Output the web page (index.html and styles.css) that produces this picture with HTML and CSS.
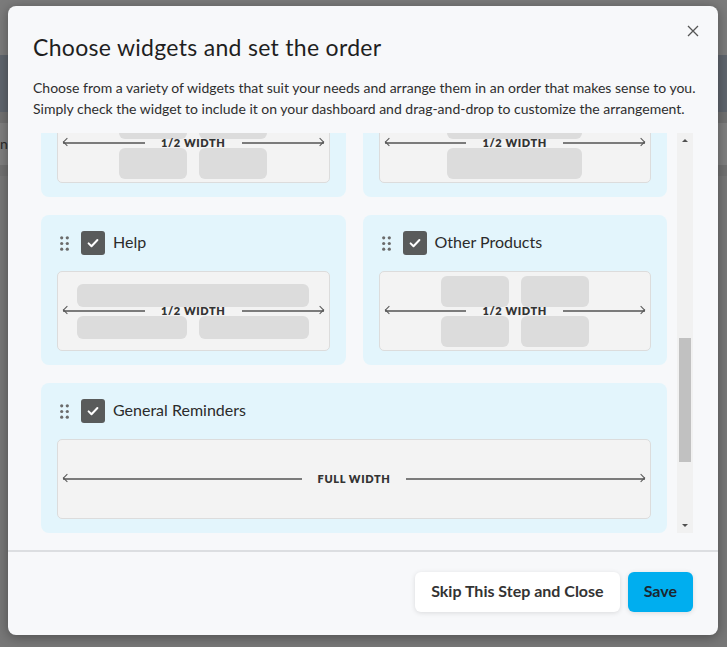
FILE: index.html
```html
<!DOCTYPE html>
<html lang="en">
<head>
    <meta charset="UTF-8">
    <meta name="viewport" content="width=device-width, initial-scale=1.0">
    <title>Dashboard - Choose widgets</title>
    <link rel="stylesheet" href="styles.css">
</head>
<body>
    <div class="page">
        <div class="page-top"></div>
        <div class="page-nav"></div>
        <div class="page-gap"></div>
        <div class="page-row"><span>Finance</span></div>
        <div class="page-gap"></div>
    </div>

    <div class="modal">
        <button class="modal-close" aria-label="Close">
            <svg width="12" height="12" viewBox="0 0 12 12"><path d="M1 1L11 11M11 1L1 11" stroke="#555" stroke-width="1.3" fill="none"/></svg>
        </button>

        <div class="modal-header">
            <h2>Choose widgets and set the order</h2>
            <p>Choose from a variety of widgets that suit your needs and arrange them in an order that makes sense to you. Simply check the widget to include it on your dashboard and drag-and-drop to customize the arrangement.</p>
        </div>

        <div class="list-wrap">
            <div class="widget-list" id="widget-list">
                <div class="widget full">
                    <div class="widget-head">
                        <span class="drag-handle"><svg width="9" height="15" viewBox="0 0 9 15"><circle cx="1.7" cy="1.8" r="1.6"/><circle cx="7.3" cy="1.8" r="1.6"/><circle cx="1.7" cy="7.5" r="1.6"/><circle cx="7.3" cy="7.5" r="1.6"/><circle cx="1.7" cy="13.2" r="1.6"/><circle cx="7.3" cy="13.2" r="1.6"/></svg></span>
                        <span class="check"><svg width="24" height="24" viewBox="0 0 24 24"><path d="M7.6 12.4l2.9 2.8 5.9-6.2" stroke="#fff" stroke-width="2" fill="none" stroke-linecap="round" stroke-linejoin="round"/></svg></span>
                        <span class="widget-name">Announcements</span>
                    </div>
                    <div class="preview">
                        <div class="width-label"><span class="line left"></span><b>Full Width</b><span class="line right"></span></div>
                    </div>
                </div>

                <div class="widget">
                    <div class="widget-head">
                        <span class="drag-handle"><svg width="9" height="15" viewBox="0 0 9 15"><circle cx="1.7" cy="1.8" r="1.6"/><circle cx="7.3" cy="1.8" r="1.6"/><circle cx="1.7" cy="7.5" r="1.6"/><circle cx="7.3" cy="7.5" r="1.6"/><circle cx="1.7" cy="13.2" r="1.6"/><circle cx="7.3" cy="13.2" r="1.6"/></svg></span>
                        <span class="check"><svg width="24" height="24" viewBox="0 0 24 24"><path d="M7.6 12.4l2.9 2.8 5.9-6.2" stroke="#fff" stroke-width="2" fill="none" stroke-linecap="round" stroke-linejoin="round"/></svg></span>
                        <span class="widget-name">My Tasks</span>
                    </div>
                    <div class="preview">
                        <div class="blocks quad"><span class="block"></span><span class="block"></span><span class="block"></span><span class="block"></span></div>
                        <div class="width-label"><span class="line left"></span><b>1/2 Width</b><span class="line right"></span></div>
                    </div>
                </div>
                <div class="widget">
                    <div class="widget-head">
                        <span class="drag-handle"><svg width="9" height="15" viewBox="0 0 9 15"><circle cx="1.7" cy="1.8" r="1.6"/><circle cx="7.3" cy="1.8" r="1.6"/><circle cx="1.7" cy="7.5" r="1.6"/><circle cx="7.3" cy="7.5" r="1.6"/><circle cx="1.7" cy="13.2" r="1.6"/><circle cx="7.3" cy="13.2" r="1.6"/></svg></span>
                        <span class="check"><svg width="24" height="24" viewBox="0 0 24 24"><path d="M7.6 12.4l2.9 2.8 5.9-6.2" stroke="#fff" stroke-width="2" fill="none" stroke-linecap="round" stroke-linejoin="round"/></svg></span>
                        <span class="widget-name">Calendar</span>
                    </div>
                    <div class="preview">
                        <div class="blocks stack"><span class="block"></span><span class="block"></span></div>
                        <div class="width-label"><span class="line left"></span><b>1/2 Width</b><span class="line right"></span></div>
                    </div>
                </div>

                <div class="widget full">
                    <div class="widget-head">
                        <span class="drag-handle"><svg width="9" height="15" viewBox="0 0 9 15"><circle cx="1.7" cy="1.8" r="1.6"/><circle cx="7.3" cy="1.8" r="1.6"/><circle cx="1.7" cy="7.5" r="1.6"/><circle cx="7.3" cy="7.5" r="1.6"/><circle cx="1.7" cy="13.2" r="1.6"/><circle cx="7.3" cy="13.2" r="1.6"/></svg></span>
                        <span class="check"><svg width="24" height="24" viewBox="0 0 24 24"><path d="M7.6 12.4l2.9 2.8 5.9-6.2" stroke="#fff" stroke-width="2" fill="none" stroke-linecap="round" stroke-linejoin="round"/></svg></span>
                        <span class="widget-name">Quick Links</span>
                    </div>
                    <div class="preview">
                        <div class="width-label"><span class="line left"></span><b>Full Width</b><span class="line right"></span></div>
                    </div>
                </div>

                <div class="widget">
                    <div class="widget-head">
                        <span class="drag-handle"><svg width="9" height="15" viewBox="0 0 9 15"><circle cx="1.7" cy="1.8" r="1.6"/><circle cx="7.3" cy="1.8" r="1.6"/><circle cx="1.7" cy="7.5" r="1.6"/><circle cx="7.3" cy="7.5" r="1.6"/><circle cx="1.7" cy="13.2" r="1.6"/><circle cx="7.3" cy="13.2" r="1.6"/></svg></span>
                        <span class="check"><svg width="24" height="24" viewBox="0 0 24 24"><path d="M7.6 12.4l2.9 2.8 5.9-6.2" stroke="#fff" stroke-width="2" fill="none" stroke-linecap="round" stroke-linejoin="round"/></svg></span>
                        <span class="widget-name">Documents</span>
                    </div>
                    <div class="preview">
                        <div class="blocks quad"><span class="block"></span><span class="block"></span><span class="block"></span><span class="block"></span></div>
                        <div class="width-label"><span class="line left"></span><b>1/2 Width</b><span class="line right"></span></div>
                    </div>
                </div>
                <div class="widget">
                    <div class="widget-head">
                        <span class="drag-handle"><svg width="9" height="15" viewBox="0 0 9 15"><circle cx="1.7" cy="1.8" r="1.6"/><circle cx="7.3" cy="1.8" r="1.6"/><circle cx="1.7" cy="7.5" r="1.6"/><circle cx="7.3" cy="7.5" r="1.6"/><circle cx="1.7" cy="13.2" r="1.6"/><circle cx="7.3" cy="13.2" r="1.6"/></svg></span>
                        <span class="check"><svg width="24" height="24" viewBox="0 0 24 24"><path d="M7.6 12.4l2.9 2.8 5.9-6.2" stroke="#fff" stroke-width="2" fill="none" stroke-linecap="round" stroke-linejoin="round"/></svg></span>
                        <span class="widget-name">Messages</span>
                    </div>
                    <div class="preview">
                        <div class="blocks stack"><span class="block"></span><span class="block"></span></div>
                        <div class="width-label"><span class="line left"></span><b>1/2 Width</b><span class="line right"></span></div>
                    </div>
                </div>

                <div class="widget">
                    <div class="widget-head">
                        <span class="drag-handle"><svg width="9" height="15" viewBox="0 0 9 15"><circle cx="1.7" cy="1.8" r="1.6"/><circle cx="7.3" cy="1.8" r="1.6"/><circle cx="1.7" cy="7.5" r="1.6"/><circle cx="7.3" cy="7.5" r="1.6"/><circle cx="1.7" cy="13.2" r="1.6"/><circle cx="7.3" cy="13.2" r="1.6"/></svg></span>
                        <span class="check"><svg width="24" height="24" viewBox="0 0 24 24"><path d="M7.6 12.4l2.9 2.8 5.9-6.2" stroke="#fff" stroke-width="2" fill="none" stroke-linecap="round" stroke-linejoin="round"/></svg></span>
                        <span class="widget-name">Help</span>
                    </div>
                    <div class="preview">
                        <div class="blocks rows"><span class="block wide"></span><span class="block"></span><span class="block"></span></div>
                        <div class="width-label"><span class="line left"></span><b>1/2 Width</b><span class="line right"></span></div>
                    </div>
                </div>
                <div class="widget">
                    <div class="widget-head">
                        <span class="drag-handle"><svg width="9" height="15" viewBox="0 0 9 15"><circle cx="1.7" cy="1.8" r="1.6"/><circle cx="7.3" cy="1.8" r="1.6"/><circle cx="1.7" cy="7.5" r="1.6"/><circle cx="7.3" cy="7.5" r="1.6"/><circle cx="1.7" cy="13.2" r="1.6"/><circle cx="7.3" cy="13.2" r="1.6"/></svg></span>
                        <span class="check"><svg width="24" height="24" viewBox="0 0 24 24"><path d="M7.6 12.4l2.9 2.8 5.9-6.2" stroke="#fff" stroke-width="2" fill="none" stroke-linecap="round" stroke-linejoin="round"/></svg></span>
                        <span class="widget-name">Other Products</span>
                    </div>
                    <div class="preview">
                        <div class="blocks quad"><span class="block"></span><span class="block"></span><span class="block"></span><span class="block"></span></div>
                        <div class="width-label"><span class="line left"></span><b>1/2 Width</b><span class="line right"></span></div>
                    </div>
                </div>

                <div class="widget full">
                    <div class="widget-head">
                        <span class="drag-handle"><svg width="9" height="15" viewBox="0 0 9 15"><circle cx="1.7" cy="1.8" r="1.6"/><circle cx="7.3" cy="1.8" r="1.6"/><circle cx="1.7" cy="7.5" r="1.6"/><circle cx="7.3" cy="7.5" r="1.6"/><circle cx="1.7" cy="13.2" r="1.6"/><circle cx="7.3" cy="13.2" r="1.6"/></svg></span>
                        <span class="check"><svg width="24" height="24" viewBox="0 0 24 24"><path d="M7.6 12.4l2.9 2.8 5.9-6.2" stroke="#fff" stroke-width="2" fill="none" stroke-linecap="round" stroke-linejoin="round"/></svg></span>
                        <span class="widget-name">General Reminders</span>
                    </div>
                    <div class="preview">
                        <div class="width-label"><span class="line left"></span><b>Full Width</b><span class="line right"></span></div>
                    </div>
                </div>

                <div class="widget full">
                    <div class="widget-head">
                        <span class="drag-handle"><svg width="9" height="15" viewBox="0 0 9 15"><circle cx="1.7" cy="1.8" r="1.6"/><circle cx="7.3" cy="1.8" r="1.6"/><circle cx="1.7" cy="7.5" r="1.6"/><circle cx="7.3" cy="7.5" r="1.6"/><circle cx="1.7" cy="13.2" r="1.6"/><circle cx="7.3" cy="13.2" r="1.6"/></svg></span>
                        <span class="check"><svg width="24" height="24" viewBox="0 0 24 24"><path d="M7.6 12.4l2.9 2.8 5.9-6.2" stroke="#fff" stroke-width="2" fill="none" stroke-linecap="round" stroke-linejoin="round"/></svg></span>
                        <span class="widget-name">Training Resources</span>
                    </div>
                    <div class="preview">
                        <div class="width-label"><span class="line left"></span><b>Full Width</b><span class="line right"></span></div>
                    </div>
                </div>
            </div>

            <div class="scrollbar">
                <span class="scroll-btn up"></span>
                <div class="scroll-track"><span class="scroll-thumb" id="scroll-thumb"></span></div>
                <span class="scroll-btn down"></span>
            </div>
        </div>

        <div class="modal-footer">
            <button class="btn btn-light">Skip This Step and Close</button>
            <button class="btn btn-primary">Save</button>
        </div>
    </div>

    <script src="script.js"></script>
</body>
</html>
```

FILE: styles.css
```css
body {
    margin: 0;
    padding: 0;
    height: 100vh;
    overflow: hidden;
    font-family: 'Lato', 'Open Sans', sans-serif;
    background: #777777;
    color: #222222;
}

/* dimmed dashboard behind the dialog */
.page-top {
    height: 55px;
    background: #7b7b7b;
}
.page-nav {
    height: 57px;
    background: #5f656d;
}
.page-gap {
    height: 11px;
    background: #717171;
}
.page-row {
    height: 42px;
    line-height: 42px;
    background: #7f7f7f;
    color: #2a2a2a;
    font-size: 14px;
    text-indent: -26px;
}

.modal {
    position: absolute;
    top: 6px;
    left: 8px;
    width: 710px;
    background: #f7f8fa;
    border-radius: 8px;
    box-shadow: 0 2px 12px rgba(0, 0, 0, 0.35);
}
.modal-close {
    position: absolute;
    top: 15px;
    right: 15px;
    width: 20px;
    height: 20px;
    padding: 0;
    border: none;
    background: none;
    display: flex;
    align-items: center;
    justify-content: center;
    cursor: pointer;
}
.modal-header {
    padding: 27px 10px 0 25px;
}
.modal-header h2 {
    margin: 0;
    font-size: 23px;
    line-height: 28px;
    font-weight: 400;
    letter-spacing: 0.3px;
    color: #1f1f1f;
}
.modal-header p {
    margin: 16px 0 0;
    font-size: 14px;
    line-height: 21px;
    color: #2e2e2e;
}

.list-wrap {
    margin: 14px 25px 0;
    height: 400px;
    display: flex;
}
.widget-list {
    flex: 1;
    overflow-y: scroll;
    scrollbar-width: none;
    padding: 23px 10px 13px 8px;
    display: grid;
    grid-template-columns: 1fr 1fr;
    gap: 18px 17px;
}
.widget-list::-webkit-scrollbar {
    display: none;
}

/* scrollbar drawn by hand, the thumb is sized from the list in script.js */
.scrollbar {
    width: 16px;
    background: #f1f1f1;
    display: flex;
    flex-direction: column;
}
.scroll-btn {
    height: 15px;
    display: flex;
    align-items: center;
    justify-content: center;
}
.scroll-btn::before {
    content: '';
    border-left: 3px solid transparent;
    border-right: 3px solid transparent;
}
.scroll-btn.up::before {
    border-bottom: 3px solid #505050;
}
.scroll-btn.down::before {
    border-top: 3px solid #505050;
}
.scroll-track {
    flex: 1;
    padding: 0 2px;
}
.scroll-thumb {
    display: block;
    background: #c1c1c1;
}

.widget {
    background: #e3f5fc;
    border-radius: 8px;
    padding: 16px 16px 14px;
}
.widget.full {
    grid-column: 1 / -1;
}
.widget-head {
    display: flex;
    align-items: center;
    height: 24px;
    margin-bottom: 16px;
}
.drag-handle {
    display: flex;
    margin: 0 12px 0 3px;
    fill: #6b6b6b;
}
.check {
    width: 24px;
    height: 24px;
    border-radius: 3px;
    background: #595b5b;
    display: flex;
}
.widget-name {
    margin-left: 8px;
    padding-bottom: 3px;
    font-size: 16px;
    color: #2b2b2b;
}

.preview {
    position: relative;
    height: 80px;
    box-sizing: border-box;
    background: #f3f3f3;
    border: 1px solid #dcdcdc;
    border-radius: 5px;
}
.blocks {
    height: 100%;
    display: grid;
    align-content: center;
    justify-content: center;
    gap: 9px 12px;
}
.blocks.quad {
    grid-template-columns: 68px 68px;
    grid-template-rows: 31px 31px;
}
.blocks.stack {
    grid-template-columns: 135px;
    grid-template-rows: 31px 31px;
}
.blocks.rows {
    grid-template-columns: 110px 110px;
    grid-template-rows: 23px 23px;
}
.block {
    background: #dcdcdc;
    border-radius: 6px;
}
.block.wide {
    grid-column: span 2;
}

.width-label {
    position: absolute;
    top: 0;
    left: 0;
    right: 0;
    bottom: 0;
    display: flex;
    align-items: center;
    padding: 0 5px;
}
.width-label b {
    margin: 0 16px;
    padding-bottom: 1px;
    font-size: 11px;
    font-weight: 800;
    letter-spacing: 0.6px;
    text-transform: uppercase;
    color: #333333;
}
.line {
    flex: 1;
    height: 2px;
    background: #7b7b7b;
    position: relative;
}
.line::before {
    content: '';
    position: absolute;
    top: -3px;
    width: 6px;
    height: 6px;
    box-sizing: border-box;
    border: 0 solid #555555;
    transform: rotate(45deg);
}
.line.left::before {
    left: 1px;
    border-left-width: 1.5px;
    border-bottom-width: 1.5px;
}
.line.right::before {
    right: 1px;
    border-top-width: 1.5px;
    border-right-width: 1.5px;
}

.modal-footer {
    margin-top: 17px;
    border-top: 2px solid #dcdee1;
    padding: 20px 25px 23px;
    display: flex;
    justify-content: flex-end;
    gap: 8px;
}
.btn {
    height: 40px;
    padding: 0 16px 3px;
    border: none;
    border-radius: 6px;
    font-family: inherit;
    font-size: 16px;
    font-weight: 700;
    cursor: pointer;
}
.btn-light {
    background: #ffffff;
    color: #333333;
    box-shadow: 0 1px 5px rgba(0, 0, 0, 0.12);
}
.btn-primary {
    background: #00aeef;
    color: #1b2630;
    box-shadow: 0 1px 5px rgba(0, 0, 0, 0.12);
}
```

FILE: script.js
```js
// open the list scrolled down to the Help row
const list = document.getElementById('widget-list');
const thumb = document.getElementById('scroll-thumb');
list.scrollTop = 613;

// size and place the thumb of the hand drawn scrollbar
function updateThumb() {
    const track = thumb.parentElement.clientHeight;
    const height = Math.round(track * list.clientHeight / list.scrollHeight);
    const maxScroll = list.scrollHeight - list.clientHeight;
    const top = maxScroll > 0 ? Math.round((track - height) * list.scrollTop / maxScroll) : 0;
    thumb.style.height = height + 'px';
    thumb.style.marginTop = top + 'px';
}

list.addEventListener('scroll', updateThumb);
updateThumb();
```
